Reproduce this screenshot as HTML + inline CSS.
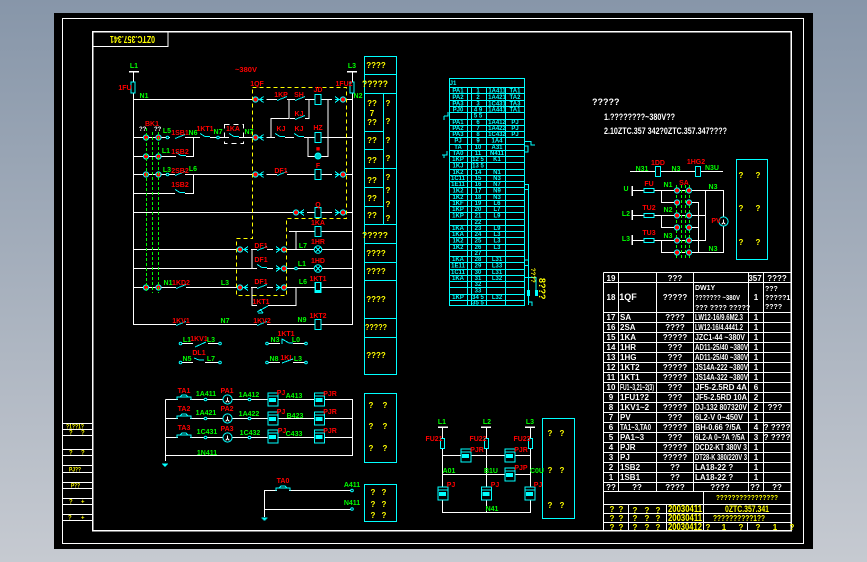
<!DOCTYPE html>
<html><head><meta charset="utf-8"><style>
html,body{margin:0;padding:0;width:867px;height:562px;overflow:hidden;background:linear-gradient(#8796a9,#c6cad1)}
svg{position:absolute;left:0;top:0;font-family:"Liberation Sans Narrow","Liberation Sans",sans-serif;font-weight:bold;font-size:6px}
line,rect,path,polyline{shape-rendering:crispEdges}
.w{stroke:#fff;stroke-width:1;fill:none}
.f{stroke:#fff;stroke-width:1.5;fill:none}
.c{stroke:#0ff;stroke-width:1;fill:none}
.cb{stroke:#0ff;stroke-width:1;fill:#000}
.k{fill:#000;stroke:none}
.y{stroke:#ff0;stroke-width:1;fill:none;stroke-dasharray:4 3}
.g{stroke:#0f0;stroke-width:1;fill:none;stroke-dasharray:3 2}
.tr text,.tr{fill:#f00;font-size:7px}
.tg text,.tg{fill:#0f0;font-size:7px}
.ty text,.ty{fill:#ff0}
.tw text,.tw{fill:#fff}
.tc text,.tc{fill:#0ff;font-size:6px}
.m text{text-anchor:middle}
</style></head><body>
<svg width="867" height="562" viewBox="0 0 867 562">
<defs>
<g id="no"><rect class="k" x="0" y="-1" width="10" height="2"/><path class="c" d="M0 1L10-3"/></g>
<g id="nc"><rect class="k" x="0" y="-1" width="10" height="2"/><path class="c" d="M0-4L5-1H10"/></g>
<g id="bk"><rect class="k" x="-3" y="-3" width="14" height="6"/><circle r="2.6" fill="#f00" stroke="#0ff"/><path class="c" d="M3 0H8M8-3L4 0L8 3"/></g>
<g id="bk2"><rect class="k" x="-11" y="-3" width="14" height="6"/><circle r="2.6" fill="#f00" stroke="#0ff"/><path class="c" d="M-3 0H-8M-8-3L-4 0L-8 3"/></g>
<g id="b"><circle r="2.6" fill="#f00" stroke="#0ff"/></g>
<g id="d"><circle r="1.3" fill="#000" stroke="#0ff"/></g>
<g id="coil"><rect class="cb" x="-3" y="-5" width="6" height="10"/></g>
<g id="lamp"><circle r="3.8" fill="#000" stroke="#0ff"/><path class="c" d="M-2.5-2.5L2.5 2.5M-2.5 2.5L2.5-2.5"/></g>
<g id="rel"><rect class="cb" x="-5" y="-7" width="10" height="13"/><path class="c" d="M-5-4H5"/><path d="M-4-2H3V2H-4Z" fill="#0ff"/></g>
<g id="met"><circle r="4.6" fill="#000" stroke="#0ff"/><path stroke="#fff" fill="none" d="M0-2V1M0 1L-2 3M0 1L2 3"/></g>
<g id="ta"><path class="c" d="M-7 2V-1H7V2M-4-1L-2-3H2L4-1"/></g>
<g id="gnd"><path class="c" d="M-3 0H3M-2 1H2M-1 2H1"/></g>
</defs>
<rect x="54" y="13" width="759" height="536" fill="#000"/>
<path class="w" d="M62.5 18.5H803.5V543.5H62.5Z"/>
<path class="f" d="M92.5 31.5H791V530.5H92.5Z"/>
<path class="w" d="M92.5 46.5H168V31.5"/>
<text x="0" y="0" transform="translate(155 36) rotate(180)" font-size="10.5" textLength="45" lengthAdjust="spacingAndGlyphs" fill="#ff0">0ZTC.357.341</text>

<!-- left strip -->
<path class="w" d="M62.5 423.5H92M62.5 429.5H92M62.5 435.5H92M62.5 449.5H92M62.5 455.5H92M62.5 465.5H92M62.5 472.5H92M62.5 482.5H92M62.5 488.5H92M62.5 498.5H92M62.5 504.5H92M62.5 514.5H92M62.5 520.5H92"/>
<g class="ty"><text x="66" y="428.5" font-size="6" textLength="18" lengthAdjust="spacingAndGlyphs">?1??1?</text><text x="69" y="434.5">?</text><text x="81" y="434.5">?</text><text x="69" y="454.5">?</text><text x="81" y="454.5">?</text><text x="69" y="471.5" textLength="12" lengthAdjust="spacingAndGlyphs">PJ??</text><text x="71" y="487.5" textLength="9" lengthAdjust="spacingAndGlyphs">P??</text><text x="69" y="503.5">?</text><text x="81" y="503.5">+</text><text x="68" y="519.5">?</text><text x="81" y="519.5">+</text></g>

<!-- main circuit lines -->
<path class="w" d="M133.5 71V324.5H352.5V71"/>
<path class="f" d="M129 71.5H139M347 71.5H357"/>
<path class="w" d="M133 99.5H352M133 137.5H352M133 156.5H193.5V137M133 174.5H352M133 193.5H193.5V174M133 212.5H352M133 249.5H352M133 268.5H352M133 287.5H352
M289 231.5H352M296 231.5V250M252 268.5H255M252 249.5V268M289 268.5H352M252 287.5V305.5H296V287M289 99.5V118.5H271V137M309 99.5V118.5H290M328 99.5V156.5H318M308 137.5V156.5H318M252 212.5"/>
<rect x="131" y="82" width="4" height="11" class="cb"/><rect x="350" y="82" width="4" height="11" class="cb"/>
<g>
<rect x="170" y="135" width="6" height="4" class="k"/>
<use href="#b" x="146" y="137.5"/><use href="#b" x="158.5" y="137.5"/><use href="#b" x="146" y="156.5"/><use href="#b" x="158.5" y="156.5"/><use href="#b" x="146" y="174.5"/><use href="#b" x="158.5" y="174.5"/><use href="#b" x="146" y="287.5"/><use href="#b" x="158.5" y="287.5"/>
<use href="#d" x="167.5" y="137.5"/><use href="#d" x="167.5" y="174.5"/><use href="#d" x="218" y="137.5"/>
<use href="#no" x="175" y="137.5"/><use href="#nc" x="176" y="156.5"/><use href="#no" x="175" y="174.5"/><use href="#nc" x="175" y="193.5"/>
<use href="#nc" x="200" y="137.5"/><use href="#nc" x="229" y="137.5"/><use href="#nc" x="275" y="137.5"/><use href="#nc" x="294" y="137.5"/>
<use href="#no" x="277" y="99.5"/><use href="#no" x="295" y="99.5"/><use href="#no" x="295" y="118.5"/><use href="#no" x="277" y="174.5"/>
<use href="#bk" x="255.5" y="99.5"/><use href="#bk" x="255.5" y="137.5"/><use href="#bk" x="255.5" y="174.5"/>
<use href="#bk2" x="343" y="99.5"/><use href="#bk2" x="343" y="174.5"/>
<use href="#bk" x="296" y="212.5"/><use href="#bk2" x="343" y="212.5"/>
<use href="#coil" x="318" y="99.5"/><use href="#coil" x="318" y="137.5"/><use href="#coil" x="318" y="174.5"/><use href="#coil" x="318" y="212.5"/><use href="#coil" x="318" y="231.5"/><use href="#coil" x="318" y="287.5"/><use href="#coil" x="318" y="324.5"/>
<circle cx="318" cy="156" r="3" fill="#0cc" stroke="#0ff"/>
<use href="#bk" x="240" y="249.5"/><use href="#bk" x="240" y="287.5"/>
<use href="#no" x="257" y="249.5"/><use href="#nc" x="257" y="268.5"/><use href="#no" x="257" y="287.5"/>
<use href="#bk2" x="284" y="249.5"/><use href="#bk2" x="284" y="268.5"/><use href="#bk2" x="284" y="287.5"/>
<use href="#d" x="296" y="268.5"/>
<use href="#lamp" x="318" y="249.5"/><use href="#lamp" x="318" y="268.5"/>
<rect x="315" y="282" width="6" height="11" fill="#0ff"/><rect x="316" y="283" width="4" height="7" fill="#000"/>
<use href="#no" x="176" y="287.5"/><use href="#no" x="176" y="324.5"/><use href="#no" x="257" y="324.5"/>
<rect x="257" y="303" width="11" height="5" class="k"/><path class="c" d="M257 312L268 306M260 309L263 313M258 313H263"/>
</g>
<path class="y" d="M252.5 87.5H346.5V218.5H286.5V295.5H236.5V238.5H252.5Z"/>
<path fill="none" stroke="#fff" stroke-dasharray="5 4" d="M224.5 124.5H243.5V143.5H224.5Z"/>
<path class="g" d="M146.5 128V293M152.5 132V293M158.5 132V293"/>

<g class="tr m">
<text x="246" y="72" font-size="9" textLength="22" lengthAdjust="spacingAndGlyphs">~380V</text>
<text x="257" y="86">1QF</text><text x="344" y="86">1FU2</text><text x="125" y="90">1FU</text>
<text x="152" y="126">BK1</text><text x="180" y="135">1SB1</text><text x="180" y="154">1SB2</text><text x="180" y="173">2SB2</text><text x="180" y="187">1SB2</text>
<text x="205" y="131">1KT1</text><text x="233" y="131">1KA</text><text x="281" y="97">1KP</text><text x="299" y="97">SH</text><text x="299" y="116">KJ</text><text x="281" y="131">KJ</text><text x="299" y="131">KJ</text><text x="318" y="92">JD</text><text x="318" y="130">HZ</text><text x="318" y="151">■</text><text x="318" y="168">F</text><text x="318" y="207">Q</text>
<text x="281" y="173">DF1</text><text x="318" y="225">1KA</text><text x="318" y="244">1HR</text><text x="318" y="263">1HD</text><text x="318" y="281">1KT1</text>
<text x="261" y="248">DF1</text><text x="261" y="262">DF1</text><text x="261" y="284">DF1</text><text x="261" y="304">1KT1</text>
<text x="181" y="285">1KD2</text><text x="181" y="323">1KV1</text><text x="262" y="323">1KV2</text><text x="318" y="318">1KT2</text>
<text x="199" y="341">1KV1</text><text x="199" y="355">DL1</text><text x="286" y="336">1KT1</text><text x="287" y="360">1KL</text>
</g>
<g class="tg m">
<text x="134" y="68">L1</text><text x="352" y="68">L3</text><text x="144" y="98">N1</text><text x="358" y="98">N2</text>
<text x="167" y="133">L5</text><text x="166" y="153">L1</text><text x="167" y="172">L3</text><text x="193" y="171">L6</text><text x="193" y="135">N6</text><text x="218" y="134">N7</text><text x="249" y="134">N7</text>
<text x="168" y="285">N1</text><text x="225" y="285">L3</text><text x="303" y="248">L7</text><text x="302" y="266">L1</text><text x="303" y="284">L6</text><text x="225" y="323">N7</text><text x="302" y="322">N9</text>
<text x="187" y="342">L1</text><text x="211" y="342">L3</text><text x="187" y="361">N5</text><text x="211" y="361">L7</text><text x="275" y="342">N3</text><text x="296" y="342">L0</text><text x="274" y="361">N8</text><text x="298" y="361">L3</text>
</g>
<g class="tw"><text x="139" y="131">??</text><text x="154" y="131">??</text></g>

<!-- controls small -->
<path class="w" d="M181 343.5H193M208 343.5H220M181 362.5H193M205 362.5H220M268 343.5H280M293 343.5H306M268 362.5H280M293 362.5H306"/>
<path class="c" d="M195 347L206 342M194 358L199 360H204M282 344V339L289 343H293M282 363L293 359"/>
<use href="#d" x="180.5" y="343.5"/><use href="#d" x="220" y="343.5"/><use href="#d" x="180.5" y="362.5"/><use href="#d" x="220" y="362.5"/><use href="#d" x="267" y="343.5"/><use href="#d" x="306" y="343.5"/><use href="#d" x="267" y="362.5"/><use href="#d" x="306" y="362.5"/>

<!-- right cyan column -->
<path class="c" d="M364.5 56.5H396.5V374.5H364.5ZM364.5 74.5H396.5M364.5 93.5H396.5M364.5 131.5H383.5M364.5 149.5H383.5M364.5 168.5H396.5M364.5 187.5H383.5M364.5 206.5H383.5M364.5 224.5H396.5M364.5 243.5H396.5M364.5 262.5H396.5M364.5 280.5H396.5M364.5 318.5H396.5M364.5 337.5H396.5M383.5 93.5V224.5"/>
<g class="ty m">
<text x="376" y="68" font-size="8">????</text><text x="375" y="87" font-size="9" textLength="26" lengthAdjust="spacingAndGlyphs">?????</text>
<text x="372" y="106" font-size="8">??</text><text x="372" y="116" font-size="8">7</text><text x="372" y="125" font-size="8">??</text>
<text x="372" y="143" font-size="8">??</text><text x="372" y="163" font-size="8">??</text><text x="372" y="183" font-size="8">??</text><text x="372" y="201" font-size="8">??</text><text x="372" y="218" font-size="8">??</text>
<text x="388" y="106" font-size="8">?</text><text x="388" y="124" font-size="8">?</text><text x="388" y="143" font-size="8">?</text><text x="388" y="161" font-size="8">?</text><text x="388" y="180" font-size="8">?</text><text x="388" y="193" font-size="8">?</text><text x="388" y="207" font-size="8">?</text><text x="388" y="221" font-size="8">?</text>
<text x="375" y="238" font-size="8" textLength="26" lengthAdjust="spacingAndGlyphs">?????</text><text x="376" y="256" font-size="8">????</text><text x="376" y="274" font-size="8">????</text><text x="376" y="302" font-size="8">????</text><text x="376" y="330" font-size="8" textLength="22" lengthAdjust="spacingAndGlyphs">?????</text><text x="376" y="358" font-size="8">????</text>
</g>

<!-- terminal table -->
<path class="c" d="M449.5 78.5H524.5V305.5H449.5ZM449.5 87.5H524.5M449.5 93.5H524.5M449.5 100.5H524.5M449.5 106.5H524.5M449.5 112.5H524.5M449.5 119.5H524.5M449.5 125.5H524.5M449.5 131.5H524.5M449.5 137.5H524.5M449.5 144.5H524.5M449.5 150.5H524.5M449.5 156.5H524.5M449.5 162.5H524.5M449.5 169.5H524.5M449.5 175.5H524.5M449.5 181.5H524.5M449.5 187.5H524.5M449.5 194.5H524.5M449.5 200.5H524.5M449.5 206.5H524.5M449.5 212.5H524.5M449.5 219.5H524.5M449.5 225.5H524.5M449.5 231.5H524.5M449.5 237.5H524.5M449.5 244.5H524.5M449.5 250.5H524.5M449.5 256.5H524.5M449.5 262.5H524.5M449.5 269.5H524.5M449.5 275.5H524.5M449.5 281.5H524.5M449.5 287.5H524.5M449.5 294.5H524.5M449.5 300.5H524.5
M467.5 87.5V305.5M471.5 87.5V305.5M486.5 87.5V305.5M505.5 87.5V305.5"/>
<path class="c" d="M524.5 141.5H531V145H535M524.5 147V152H528V146H524.5M524.5 184.5H528.5V305M524.5 189.5H528.5M524.5 260H528.5M524.5 265.5H528.5M524.5 277.5H536V291M528.5 277V290M528.5 302H532V306M444 116H448V112M444 116V120M442 155H447V151M444 155V158"/>
<rect x="527" y="290" width="3" height="6" fill="#0ff"/><rect x="535" y="290" width="3" height="6" fill="#0ff"/>
<g class="tc m">
<text x="453" y="85" font-size="6">J1</text>
<text x="458" y="92.5">PA1</text><text x="478" y="92.5">1</text><text x="497" y="92.5">1A411</text><text x="515" y="92.5">TA1</text>
<text x="458" y="99">PA2</text><text x="478" y="99">2</text><text x="497" y="99">1A421</text><text x="515" y="99">TA2</text>
<text x="458" y="105.5">PA3</text><text x="478" y="105.5">3</text><text x="497" y="105.5">1C431</text><text x="515" y="105.5">TA3</text>
<text x="458" y="111.5">PJ0</text><text x="478" y="111.5">4 9</text><text x="497" y="111.5">1A441</text><text x="515" y="111.5">TA1</text>
<text x="478" y="117.5">5 5</text>
<text x="458" y="124">PA1</text><text x="478" y="124">6</text><text x="497" y="124">1A412</text><text x="515" y="124">PJ</text>
<text x="458" y="130">PA2</text><text x="478" y="130">7</text><text x="497" y="130">1A422</text><text x="515" y="130">PJ</text>
<text x="458" y="136">PA3</text><text x="478" y="136">8</text><text x="497" y="136">1C432</text><text x="515" y="136">PJ</text>
<text x="458" y="142.5">PJ</text><text x="478" y="142.5">9</text><text x="497" y="142.5">1A4</text>
<text x="458" y="149">TA</text><text x="478" y="149">10</text><text x="497" y="149">A31</text>
<text x="458" y="155">TA0</text><text x="478" y="155">11</text><text x="497" y="155">N411</text>
<text x="458" y="161">1KP</text><text x="478" y="161">12 5</text><text x="497" y="161">K1</text>
<text x="458" y="167.5">1KJ</text><text x="478" y="167.5">13 5</text>
<text x="458" y="174">1K2</text><text x="478" y="174">14</text><text x="497" y="174">N1</text>
<text x="458" y="180">1C11</text><text x="478" y="180">15</text><text x="497" y="180">N3</text>
<text x="458" y="186">1E11</text><text x="478" y="186">16</text><text x="497" y="186">N7</text>
<text x="458" y="192.5">1K2</text><text x="478" y="192.5">17</text><text x="497" y="192.5">N9</text>
<text x="458" y="199">1K2</text><text x="478" y="199">18</text><text x="497" y="199">N3</text>
<text x="458" y="205">1KF</text><text x="478" y="205">19</text><text x="497" y="205">L6</text>
<text x="458" y="211">1KP</text><text x="478" y="211">20</text><text x="497" y="211">L7</text>
<text x="458" y="217.5">1KP</text><text x="478" y="217.5">21</text><text x="497" y="217.5">L9</text>
<text x="478" y="224">22</text>
<text x="458" y="230">1KA</text><text x="478" y="230">23</text><text x="497" y="230">L9</text>
<text x="458" y="236">1KA</text><text x="478" y="236">24</text><text x="497" y="236">L3</text>
<text x="458" y="242.5">1K2</text><text x="478" y="242.5">25</text><text x="497" y="242.5">L3</text>
<text x="458" y="249">1K2</text><text x="478" y="249">26</text><text x="497" y="249">L3</text>
<text x="478" y="255">27</text>
<text x="458" y="261">1KA</text><text x="478" y="261">28</text><text x="497" y="261">L31</text>
<text x="458" y="267.5">1E11</text><text x="478" y="267.5">29</text><text x="497" y="267.5">L33</text>
<text x="458" y="274">1C11</text><text x="478" y="274">30</text><text x="497" y="274">L31</text>
<text x="458" y="280">1KA</text><text x="478" y="280">31</text><text x="497" y="280">L32</text>
<text x="478" y="286">32</text><text x="478" y="292.5">33</text>
<text x="458" y="299">1KP</text><text x="478" y="299">34 5</text><text x="497" y="299">L32</text>
<text x="478" y="304.5">35 5</text>
</g>
<g class="ty"><text x="0" y="0" transform="translate(531 268) rotate(90)" font-size="6" font-weight="bold">????</text><text x="0" y="0" transform="translate(539 278) rotate(90)" font-size="9">8???</text></g>

<!-- right upper text -->
<g class="tw"><text x="592" y="105" font-size="9">?????</text><text x="604" y="120" font-size="9" textLength="71" lengthAdjust="spacingAndGlyphs">1.????????~380V??</text><text x="604" y="134" font-size="9" textLength="123" lengthAdjust="spacingAndGlyphs">2.10ZTC.357 342?0ZTC.357.347????</text></g>

<!-- voltmeter circuit -->
<path class="w" d="M630 171.5H723M632 190.5H723.5V252.5H661.5V240.5M632 215.5H689M632 240.5H689M661.5 190.5V202.5H677M661.5 215.5V227.5H677M661.5 252.5H677M689 202.5H698.5V252M689 215.5H705M689 227.5H699M705.5 190.5V240.5H689"/>
<path class="f" d="M632 186V196M632 210V220M632 235V245"/>
<path class="cb" d="M655.5 166.5H660.5V176.5H655.5ZM695.5 166.5H700.5V176.5H695.5ZM644 188.5H654V192.5H644ZM644 213.5H654V217.5H644ZM644 238.5H654V242.5H644Z"/>
<path class="g" d="M676.5 185V259M681.5 185V259M685.5 185V259M689.5 185V259"/>
<g><use href="#b" x="677" y="190.5"/><use href="#b" x="677" y="202.5"/><use href="#b" x="677" y="215.5"/><use href="#b" x="677" y="227.5"/><use href="#b" x="677" y="240.5"/><use href="#b" x="677" y="252.5"/><use href="#b" x="689" y="190.5"/><use href="#b" x="689" y="202.5"/><use href="#b" x="689" y="215.5"/><use href="#b" x="689" y="227.5"/><use href="#b" x="689" y="240.5"/><use href="#b" x="689" y="252.5"/></g>
<use href="#met" x="723.5" y="221.5"/>
<path class="c" d="M736.5 159.5H767.5V259.5H736.5Z"/>
<g class="tr m"><text x="658" y="165">1DD</text><text x="696" y="164">1HG2</text><text x="649" y="186">FU</text><text x="649" y="210">TU2</text><text x="649" y="235">TU3</text><text x="684" y="185">SA</text><text x="716" y="223">PV</text></g>
<g class="tg m"><text x="626" y="191">U</text><text x="626" y="216">L2</text><text x="626" y="241">L3</text><text x="642" y="171">N31</text><text x="676" y="171">N3</text><text x="712" y="170">N3U</text><text x="668" y="187">N1</text><text x="668" y="212">N2</text><text x="668" y="238">N3</text><text x="713" y="189">N3</text><text x="713" y="251">N3</text></g>
<g class="ty m"><text x="741" y="178" font-size="8">?</text><text x="758" y="178" font-size="8">?</text><text x="741" y="211" font-size="8">?</text><text x="758" y="211" font-size="8">?</text><text x="741" y="245" font-size="8">?</text><text x="758" y="245" font-size="8">?</text></g>

<!-- BOM -->
<path class="w" d="M603.5 272.5H791M603.5 282.5H791M603.5 312.5H791M603.5 322.5H791M603.5 332.5H791M603.5 342.5H791M603.5 352.5H791M603.5 362.5H791M603.5 372.5H791M603.5 382.5H791M603.5 392.5H791M603.5 402.5H791M603.5 412.5H791M603.5 422.5H791M603.5 432.5H791M603.5 442.5H791M603.5 452.5H791M603.5 462.5H791M603.5 472.5H791M603.5 482.5H791M603.5 491.5H791M603.5 504.5H791M603.5 513.5H791M603.5 522.5H791
M603.5 272.5V530.5M618.5 272.5V491M656.5 272.5V491M693.5 272.5V491M748.5 272.5V491M763.5 272.5V491M703.5 491.5V530.5M628.5 504.5V530.5M666.5 504.5V530.5M747.5 522.5V530.5"/>
<g class="tw m" style="font-size:8px">
<text x="611" y="281">19</text><text x="675" y="281">???</text><text x="755" y="281">357</text><text x="777" y="281">????</text>
<text x="611" y="300">18</text><text x="628" y="300" font-size="9">1QF</text><text x="675" y="300">?????</text><text x="756" y="300">1</text>
<text x="611" y="320">17</text><text x="611" y="330">16</text><text x="611" y="340">15</text><text x="611" y="350">14</text><text x="611" y="360">13</text><text x="611" y="370">12</text><text x="611" y="380">11</text><text x="611" y="390">10</text><text x="611" y="400">9</text><text x="611" y="410">8</text><text x="611" y="420">7</text><text x="611" y="430">6</text><text x="611" y="440">5</text><text x="611" y="450">4</text><text x="611" y="460">3</text><text x="611" y="470">2</text><text x="611" y="480">1</text><text x="611" y="490">??</text>
<text x="675" y="320">????</text><text x="675" y="330">????</text><text x="675" y="340">?????</text><text x="675" y="350">???</text><text x="675" y="360">???</text><text x="675" y="370">?????</text><text x="675" y="380">?????</text><text x="675" y="390">???</text><text x="675" y="400">???</text><text x="675" y="410">?????</text><text x="675" y="420">???</text><text x="675" y="430">?????</text><text x="675" y="440">???</text><text x="675" y="450">?????</text><text x="675" y="460">?????</text><text x="675" y="470">??</text><text x="675" y="480">??</text><text x="675" y="490">????</text><text x="637" y="490">??</text><text x="720" y="490">????</text><text x="755" y="490">??</text><text x="777" y="490">??</text>
<text x="756" y="320">1</text><text x="756" y="330">1</text><text x="756" y="340">1</text><text x="756" y="350">1</text><text x="756" y="360">1</text><text x="756" y="370">1</text><text x="756" y="380">1</text><text x="756" y="390">6</text><text x="756" y="400">2</text><text x="756" y="410">2</text><text x="756" y="420">1</text><text x="756" y="430">4</text><text x="756" y="440">3</text><text x="756" y="450">1</text><text x="756" y="460">1</text><text x="756" y="470">1</text><text x="756" y="480">1</text>
<text x="775" y="410">???</text><text x="777" y="430">? ????</text><text x="777" y="440">? ????</text>
</g>
<g class="tw" style="font-size:8px">
<text x="695" y="290" font-size="7">DW1Y</text><text x="695" y="300" font-size="7" textLength="45" lengthAdjust="spacingAndGlyphs">??????? ~380V</text><text x="695" y="310" font-size="7">??? ???? ?????</text>
<text x="765" y="291" font-size="7">???</text><text x="765" y="300" font-size="7">?????1</text><text x="765" y="309" font-size="7">????</text>
<text x="620" y="320">SA</text><text x="620" y="330">2SA</text><text x="620" y="340">1KA</text><text x="620" y="350">1HR</text><text x="620" y="360">1HG</text><text x="620" y="370">1KT2</text><text x="620" y="380">1KT1</text><text x="620" y="390" textLength="34" lengthAdjust="spacingAndGlyphs">FU1~3,21~2(3)</text><text x="620" y="400">1FU1?2</text><text x="620" y="410">1KV1~2</text><text x="620" y="420">PV</text><text x="620" y="430" textLength="31" lengthAdjust="spacingAndGlyphs">TA1~3,TA0</text><text x="620" y="440">PA1~3</text><text x="620" y="450">PJR</text><text x="620" y="460">PJ</text><text x="620" y="470">1SB2</text><text x="620" y="480">1SB1</text>
<text x="695" y="320" textLength="48" lengthAdjust="spacingAndGlyphs">LW12-16/9.6M2.3</text><text x="695" y="330" textLength="48" lengthAdjust="spacingAndGlyphs">LW12-16/4.4441.2</text><text x="695" y="340" textLength="50" lengthAdjust="spacingAndGlyphs">JZC1-44 ~380V</text><text x="695" y="350" textLength="53" lengthAdjust="spacingAndGlyphs">AD11-25/40 ~380V</text><text x="695" y="360" textLength="53" lengthAdjust="spacingAndGlyphs">AD11-25/40 ~380V</text><text x="695" y="370" textLength="53" lengthAdjust="spacingAndGlyphs">JS14A-222 ~380V</text><text x="695" y="380" textLength="53" lengthAdjust="spacingAndGlyphs">JS14A-322 ~380V</text><text x="695" y="390" textLength="52" lengthAdjust="spacingAndGlyphs">JF5-2.5RD  4A</text><text x="695" y="400" textLength="52" lengthAdjust="spacingAndGlyphs">JF5-2.5RD  10A</text><text x="695" y="410" textLength="52" lengthAdjust="spacingAndGlyphs">DJ-132 807320V</text><text x="695" y="420" textLength="48" lengthAdjust="spacingAndGlyphs">6L2-V 0~450V</text><text x="695" y="430" textLength="46" lengthAdjust="spacingAndGlyphs">BH-0.66 ?/5A</text><text x="695" y="440" textLength="50" lengthAdjust="spacingAndGlyphs">6L2-A 0~?A ?/5A</text><text x="695" y="450" textLength="52" lengthAdjust="spacingAndGlyphs">DCD2-KT 380V 3</text><text x="695" y="460" textLength="52" lengthAdjust="spacingAndGlyphs">DT28-K 380/220V 3</text><text x="695" y="470">LA18-22 ?</text><text x="695" y="480">LA18-22 ?</text>
</g>
<g class="ty m" style="font-size:8px">
<text x="747" y="500" font-size="7" textLength="62" lengthAdjust="spacingAndGlyphs">????????????????</text>
<text x="747" y="512" font-size="9" textLength="44" lengthAdjust="spacingAndGlyphs">0ZTC.357.341</text>
<text x="739" y="521" font-size="8" textLength="52" lengthAdjust="spacingAndGlyphs">??????????1??</text>
<text x="685" y="512" font-size="10" textLength="34" lengthAdjust="spacingAndGlyphs">20030411</text><text x="685" y="521" font-size="10" textLength="34" lengthAdjust="spacingAndGlyphs">20030411</text><text x="685" y="530" font-size="10" textLength="34" lengthAdjust="spacingAndGlyphs">20030412</text>
<text x="612" y="512">?</text><text x="621" y="512">?</text><text x="635" y="513">?</text><text x="647" y="513">?</text><text x="658" y="513">?</text>
<text x="612" y="521">?</text><text x="621" y="521">?</text><text x="635" y="521">?</text><text x="647" y="521">?</text><text x="658" y="521">?</text>
<text x="612" y="530">?</text><text x="621" y="530">?</text><text x="635" y="530">?</text><text x="647" y="530">?</text><text x="658" y="530">?</text>
<text x="708" y="530">?</text><text x="724" y="530">1</text><text x="741" y="530">?</text><text x="758" y="530">?</text><text x="775" y="530">1</text><text x="792" y="530">?</text>
</g>

<!-- meters circuit -->
<path class="w" d="M165.5 399.5V461M165.5 399.5H352.5V455.5H165M165 418.5H352M165 437.5H352"/>
<use href="#gnd" x="165" y="464"/>
<g>
<rect x="178" y="396" width="12" height="6" class="k"/><rect x="178" y="415" width="12" height="6" class="k"/><rect x="178" y="434" width="12" height="6" class="k"/>
<use href="#ta" x="184" y="398"/><use href="#ta" x="184" y="417"/><use href="#ta" x="184" y="436"/>
<use href="#d" x="205.5" y="399.5"/><use href="#d" x="205.5" y="418.5"/><use href="#d" x="205.5" y="437.5"/>
<use href="#d" x="249.5" y="399.5"/><use href="#d" x="249.5" y="418.5"/><use href="#d" x="249.5" y="437.5"/>
<use href="#met" x="227.5" y="399.5"/><use href="#met" x="227.5" y="418.5"/><use href="#met" x="227.5" y="437.5"/>
<use href="#rel" x="273" y="400"/><use href="#rel" x="273" y="419"/><use href="#rel" x="273" y="437"/>
<use href="#rel" x="319.5" y="400"/><use href="#rel" x="319.5" y="419"/><use href="#rel" x="319.5" y="437"/>
</g>
<path class="c" d="M364.5 393.5H396.5V462.5H364.5Z"/>
<g class="tr m"><text x="184" y="393">TA1</text><text x="184" y="411">TA2</text><text x="184" y="430">TA3</text><text x="227" y="393">PA1</text><text x="227" y="411">PA2</text><text x="227" y="431">PA3</text><text x="281" y="395">PJ</text><text x="281" y="414">PJ</text><text x="282" y="433">PJ</text><text x="330" y="396">PJR</text><text x="330" y="414">PJR</text><text x="330" y="433">PJR</text></g>
<g class="tg m"><text x="206" y="396">1A411</text><text x="206" y="415">1A421</text><text x="207" y="434">1C431</text><text x="249" y="397">1A412</text><text x="249" y="416">1A422</text><text x="250" y="435">1C432</text><text x="294" y="398">A413</text><text x="295" y="418">B423</text><text x="294" y="436">C433</text><text x="207" y="455">1N411</text></g>
<g class="ty m"><text x="371" y="408" font-size="8">?</text><text x="385" y="408" font-size="8">?</text><text x="371" y="429" font-size="8">?</text><text x="385" y="429" font-size="8">?</text><text x="371" y="451" font-size="8">?</text><text x="385" y="451" font-size="8">?</text></g>
<path class="w" d="M264.5 510V490.5H352M265 509.5H352M264.5 510V517"/>
<rect x="277" y="488" width="12" height="5" class="k"/><use href="#ta" x="283" y="489"/><use href="#gnd" x="264.5" y="518"/>
<use href="#d" x="352" y="490.5"/><use href="#d" x="352" y="509"/>
<path class="c" d="M364.5 484.5H396.5V521.5H364.5Z"/>
<g class="tr m"><text x="283" y="483">TA0</text></g>
<g class="tg m"><text x="352" y="487">A411</text><text x="352" y="505">N411</text></g>
<g class="ty m"><text x="373" y="495" font-size="8">?</text><text x="384" y="495" font-size="8">?</text><text x="373" y="507" font-size="8">?</text><text x="384" y="507" font-size="8">?</text><text x="373" y="518" font-size="8">?</text><text x="384" y="518" font-size="8">?</text></g>

<!-- bottom circuit -->
<path class="w" d="M442.5 427V512.5H530.5V427M486.5 427V512.5M442.5 455.5H530M442.5 474.5H530"/>
<path class="f" d="M438 427H448M481 427H491M525 427H535"/>
<path class="cb" d="M440.5 438.5H444.5V448.5H440.5ZM484.5 438.5H488.5V448.5H484.5ZM528.5 438.5H532.5V448.5H528.5Z"/>
<g><use href="#rel" x="466" y="456"/><use href="#rel" x="510" y="456"/><use href="#rel" x="510" y="475"/><use href="#rel" x="443" y="494"/><use href="#rel" x="486.5" y="494"/><use href="#rel" x="530" y="494"/></g>
<path class="c" d="M542.5 418.5H574.5V518.5H542.5Z"/>
<g class="tr m"><text x="434" y="441">FU21</text><text x="478" y="441">FU22</text><text x="522" y="441">FU23</text><text x="477" y="452">PJR</text><text x="521" y="452">PJR</text><text x="521" y="470">PJP</text><text x="451" y="487">PJ</text><text x="495" y="487">PJ</text><text x="538" y="487">PJ</text></g>
<g class="tg m"><text x="442" y="424">L1</text><text x="487" y="424">L2</text><text x="530" y="424">L3</text><text x="449" y="473">A01</text><text x="491" y="473">B1U</text><text x="537" y="473">C0U</text><text x="492" y="511">N41</text></g>
<g class="ty m"><text x="550" y="436" font-size="8">?</text><text x="562" y="436" font-size="8">?</text><text x="550" y="473" font-size="8">?</text><text x="562" y="473" font-size="8">?</text><text x="550" y="508" font-size="8">?</text><text x="562" y="508" font-size="8">?</text></g>
</svg>
</body></html>
